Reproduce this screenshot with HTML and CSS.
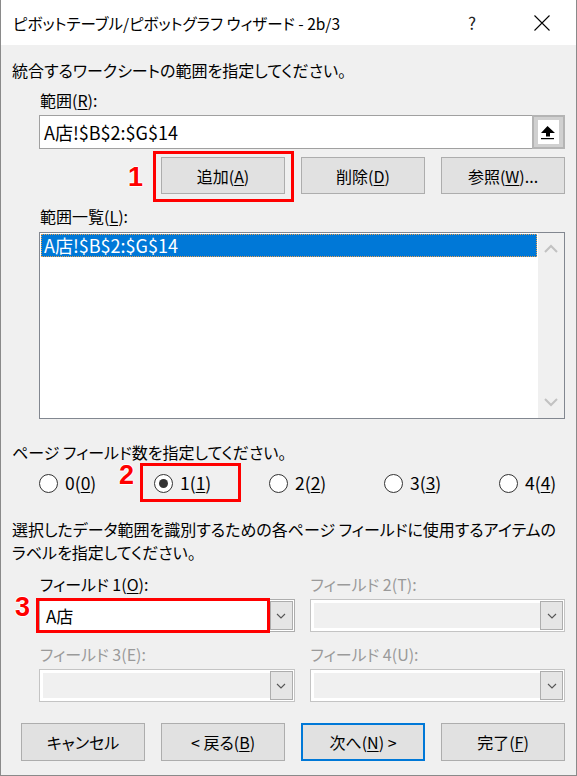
FILE: index.html
```html
<!DOCTYPE html>
<html lang="ja">
<head>
<meta charset="UTF-8">
<meta name="viewport" content="width=device-width, initial-scale=1.0">
<title>ピボットテーブル/ピボットグラフ ウィザード - 2b/3</title>
<link rel="stylesheet" href="styles.css">
</head>
<body>
<div class="window">
<div class="titlebar">
<span class="title">ピボットテーブル/ピボットグラフ ウィザード - 2b/3</span>
<span class="tb-btn help">?</span>
<span class="tb-btn close">
<svg width="16" height="16" viewBox="0 0 16 16"><path d="M0.5 0.5 L15.5 15.5 M15.5 0.5 L0.5 15.5" stroke="#000" stroke-width="1.1" fill="none"/></svg>
</span>
</div>
<div class="content">
<p class="intro">統合するワークシートの範囲を指定してください。</p>
<div class="indent">
<label class="caption">範囲(<u>R</u>):</label>
<div class="refedit">
<span class="refedit-text">A店!$B$2:$G$14</span>
<span class="refedit-btn">
<span class="refedit-icon">
<svg width="21" height="24" viewBox="0 0 21 24"><path d="M9.5 6 L3 13 L8 13 L8 16.5 L12 16.5 L12 13 L17 13 Z" fill="#000"/><rect x="3" y="18" width="13" height="1.2" fill="#000"/></svg>
</span>
</span>
</div>
</div>
<div class="range-buttons">
<button class="btn">追加(<u>A</u>)<span class="mark mark-add"><span class="num num-1">1</span></span></button>
<button class="btn">削除(<u>D</u>)</button>
<button class="btn">参照(<u>W</u>)...</button>
</div>
<div class="indent">
<label class="caption list-caption">範囲一覧(<u>L</u>):</label>
<div class="listbox">
<div class="list-items">
<div class="list-item selected">A店!$B$2:$G$14</div>
</div>
<div class="scrollbar">
<svg width="26" height="26" viewBox="0 0 26 26"><path d="M7 16 L13 10 L19 16" stroke="#c2c2c2" stroke-width="2" fill="none"/></svg>
<svg width="26" height="26" viewBox="0 0 26 26"><path d="M7 10 L13 16 L19 10" stroke="#c2c2c2" stroke-width="2" fill="none"/></svg>
</div>
</div>
</div>
<p class="page-text">ページ フィールド数を指定してください。</p>
<div class="radio-row">
<div class="radio"><span class="radio-dot"></span><span>0(<u>0</u>)</span></div>
<div class="radio"><span class="radio-dot checked"></span><span>1(<u>1</u>)</span><span class="mark mark-radio"><span class="num num-2">2</span></span></div>
<div class="radio"><span class="radio-dot"></span><span>2(<u>2</u>)</span></div>
<div class="radio"><span class="radio-dot"></span><span>3(<u>3</u>)</span></div>
<div class="radio"><span class="radio-dot"></span><span>4(<u>4</u>)</span></div>
</div>
<p class="field-help">選択したデータ範囲を識別するための各ページ フィールドに使用するアイテムの<br>ラベルを指定してください。</p>
<div class="fields">
<div class="field">
<label class="caption">フィールド 1(<u>O</u>):</label>
<div class="combo">
<span class="combo-text">A店</span>
<span class="combo-arrow"><svg width="10" height="6" viewBox="0 0 10 6"><path d="M1 1 L5 5 L9 1" stroke="#555" stroke-width="1.1" fill="none"/></svg></span>
<span class="mark mark-field"><span class="num num-3">3</span></span>
</div>
</div>
<div class="field disabled">
<label class="caption">フィールド 2(T):</label>
<div class="combo">
<span class="combo-text"></span>
<span class="combo-arrow"><svg width="10" height="6" viewBox="0 0 10 6"><path d="M1 1 L5 5 L9 1" stroke="#555" stroke-width="1.1" fill="none"/></svg></span>
</div>
</div>
<div class="field disabled">
<label class="caption">フィールド 3(E):</label>
<div class="combo">
<span class="combo-text"></span>
<span class="combo-arrow"><svg width="10" height="6" viewBox="0 0 10 6"><path d="M1 1 L5 5 L9 1" stroke="#555" stroke-width="1.1" fill="none"/></svg></span>
</div>
</div>
<div class="field disabled">
<label class="caption">フィールド 4(U):</label>
<div class="combo">
<span class="combo-text"></span>
<span class="combo-arrow"><svg width="10" height="6" viewBox="0 0 10 6"><path d="M1 1 L5 5 L9 1" stroke="#555" stroke-width="1.1" fill="none"/></svg></span>
</div>
</div>
</div>
<div class="footer">
<button class="btn">キャンセル</button>
<button class="btn">&lt; 戻る(<u>B</u>)</button>
<button class="btn default">次へ(<u>N</u>) &gt;</button>
<button class="btn">完了(<u>F</u>)</button>
</div>
</div>
</div>
</body>
</html>
```

FILE: styles.css
```css
:root {
    --face-color: #f0f0f0;
    --button-color: #e1e1e1;
    --border-color: #adadad;
    --text-color: #000;
    --disabled-color: #9a9a9a;
    --accent-color: #0078d7;
    --mark-color: #ff0000;
}
* {
    margin: 0;
    padding: 0;
    box-sizing: border-box;
}
body {
    background: #fff;
}
.window {
    width: 577px;
    height: 776px;
    overflow: hidden;
    border: 1px solid #8a8a8a;
    border-top: none;
    background: var(--face-color);
    color: var(--text-color);
    font-family: "Noto Sans CJK JP", sans-serif;
    font-size: 16px;
    font-feature-settings: "palt";
    line-height: 20px;
}
.titlebar {
    height: 45px;
    background: #fff;
    display: flex;
    align-items: center;
    padding-left: 12px;
    padding-right: 11px;
}
.title {
    flex: 1;
    font-size: 15.5px;
}
.tb-btn {
    width: 46px;
    height: 45px;
    display: flex;
    align-items: center;
    justify-content: center;
}
.help {
    margin-right: 24px;
    font-size: 17px;
    color: #222;
}
.content {
    padding: 0 11px 0 11px;
}
u {
    text-underline-offset: 2px;
    text-decoration-thickness: 1px;
}
.intro {
    margin-top: 15px;
}
.indent {
    margin-left: 27px;
}
.caption {
    display: block;
    padding-left: 1px;
}
.indent .caption {
    margin-top: 10px;
}
.refedit {
    margin-top: 5px;
    height: 34px;
    display: flex;
    border: 1px solid #a0a0a0;
    background: #fff;
}
.refedit-text {
    flex: 1;
    padding-left: 4px;
    font-size: 18px;
    line-height: 32px;
}
.refedit-btn {
    width: 33px;
    margin: -1px -1px -1px 0;
    border: 2px solid #b4b4b4;
    background: #d0d0d0;
    display: flex;
    align-items: center;
    justify-content: center;
}
.refedit-icon {
    width: 21px;
    height: 24px;
    background: #fff;
    display: flex;
}
.range-buttons {
    margin-top: 8px;
    display: flex;
    justify-content: flex-end;
    gap: 16px;
}
.btn {
    position: relative;
    width: 124px;
    height: 37px;
    border: 1px solid var(--border-color);
    background: var(--button-color);
    color: var(--text-color);
    font-family: inherit;
    font-size: 16px;
    font-feature-settings: "palt";
}
.btn.default {
    border: 2px solid var(--accent-color);
}
.list-caption {
    margin-top: 12px !important;
}
.listbox {
    margin-top: 6px;
    height: 187px;
    border: 1px solid #828790;
    background: #fff;
    display: flex;
}
.list-items {
    flex: 1;
    padding: 1px;
}
.list-item {
    height: 23px;
    padding-left: 2px;
    font-size: 18px;
    line-height: 21px;
}
.list-item.selected {
    background: var(--accent-color);
    color: #fff;
    border: 1px dotted #e8a050;
}
.scrollbar {
    width: 26px;
    background: var(--face-color);
    display: flex;
    flex-direction: column;
    justify-content: space-between;
    padding: 3px 0;
}
.page-text {
    margin-top: 23px;
}
.radio-row {
    margin-top: 11px;
    margin-left: 27px;
    display: grid;
    grid-template-columns: repeat(4, 115px) auto;
}
.radio {
    position: relative;
    display: flex;
    align-items: center;
    gap: 7px;
    height: 20px;
    font-size: 17.5px;
}
.radio-dot {
    width: 19px;
    height: 19px;
    border: 1px solid #333;
    border-radius: 50%;
    background: #fff;
    display: flex;
    align-items: center;
    justify-content: center;
}
.radio-dot.checked::after {
    content: "";
    width: 9px;
    height: 9px;
    border-radius: 50%;
    background: #333;
}
.field-help {
    margin-top: 25px;
    line-height: 23px;
}
.fields {
    margin-top: 10px;
    margin-left: 27px;
    display: grid;
    grid-template-columns: 1fr 1fr;
    column-gap: 15px;
    row-gap: 12px;
}
.combo {
    position: relative;
    margin-top: 5px;
    height: 33px;
    display: flex;
    border: 1px solid var(--border-color);
    background: #fff;
    padding: 1px;
}
.combo-text {
    flex: 1;
    padding-left: 5px;
    font-size: 17px;
    line-height: 29px;
}
.combo-arrow {
    width: 23px;
    border: 1px solid var(--border-color);
    background: #e5e5e5;
    display: flex;
    align-items: center;
    justify-content: center;
}
.field.disabled .caption {
    color: var(--disabled-color);
}
.field.disabled .combo {
    border-color: #c4c4c4;
    padding: 3px 1px 3px 3px;
}
.field.disabled .combo-text {
    background: var(--face-color);
}
.field.disabled .combo-arrow {
    margin: -2px 0;
}
.footer {
    margin-top: 21px;
    display: flex;
    justify-content: flex-end;
    gap: 16px;
}
.footer .btn {
    height: 38px;
}
.mark {
    position: absolute;
    border: 3px solid var(--mark-color);
}
.mark-add {
    left: -9px;
    top: -7px;
    width: 141px;
    height: 51px;
}
.mark-radio {
    left: -14px;
    top: -10px;
    width: 101px;
    height: 39px;
}
.mark-field {
    left: -4px;
    top: -2px;
    width: 234px;
    height: 35px;
}
.num {
    position: absolute;
    font-family: "Liberation Sans", Arial, sans-serif;
    font-weight: bold;
    font-size: 27px;
    line-height: 27px;
    color: var(--mark-color);
    text-shadow: 1px 0 #fff, -1px 0 #fff, 0 1px #fff, 0 -1px #fff;
}
.num-1 {
    left: -28px;
    top: 10px;
}
.num-2 {
    left: -24px;
    top: -4px;
}
.num-3 {
    left: -24px;
    top: -7px;
}
```
